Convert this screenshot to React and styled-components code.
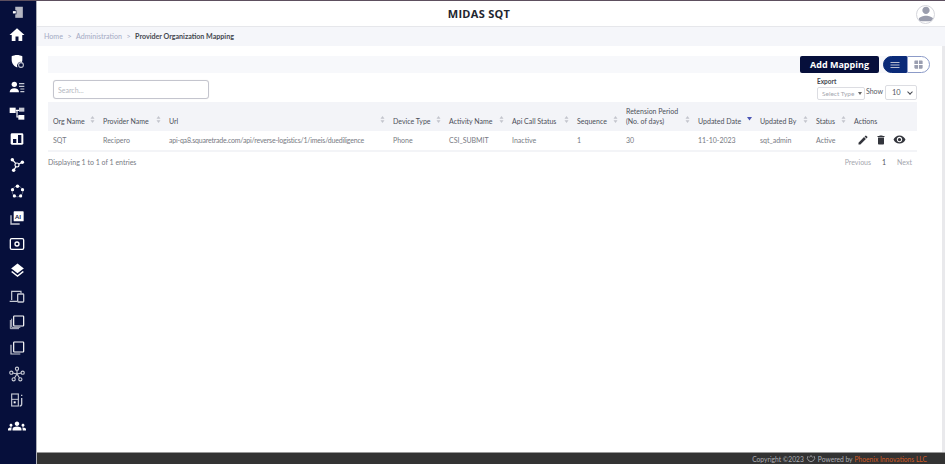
import React from "react";
import styled, { createGlobalStyle } from "styled-components";
import { MdHome, MdEdit, MdDelete, MdVisibility, MdMenu, MdWindow, MdPerson, MdLayers, MdGroups } from "react-icons/md";

const Global = createGlobalStyle`
  html, body { margin: 0; padding: 0; background: #fff; }
  body { font-family: "Lato", "Open Sans", sans-serif; overflow: hidden; }
  * { box-sizing: border-box; }
`;

const Page = styled.div`
  width: 945px; height: 464px; display: flex; flex-direction: column; overflow: hidden;
`;
const TopLine = styled.div`height: 1px; background: #5d4f5f; flex: none;`;
const Body = styled.div`flex: 1; display: flex; min-height: 0;`;
const Sidebar = styled.nav`
  width: 36px; flex: none; background: #060f3b; display: flex; flex-direction: column; align-items: center;
  padding: 2px 2px 0 0;
`;
const NavItem = styled.div`
  width: 18px; height: ${p => p.$h || 26}px; flex: none; display: flex; align-items: center; justify-content: center; color: #fff;
  svg { display: block; }
`;
const Content = styled.div`flex: 1; min-width: 0; display: flex; flex-direction: column; border-left: 1px solid #aeb0b8;`;
const Header = styled.header`
  height: 26px; flex: none; display: flex; align-items: center; justify-content: center; position: relative;
  border-bottom: 1px solid #e6e7eb; background: #fff;
`;
const Title = styled.h1`
  margin: 0 0 0 -24px; font: 700 11px "Open Sans", sans-serif; color: #22252e; letter-spacing: .3px;
`;
const Avatar = styled.div`
  position: absolute; right: 10px; top: 4px; width: 19px; height: 19px; border-radius: 50%;
  border: 1px solid #d5d6dc; display: flex; align-items: flex-end; justify-content: center; color: #9a9dad; overflow: hidden;
  svg { margin-bottom: -2px; flex: none; }
`;
const Crumbs = styled.div`
  height: 19px; flex: none; background: #f5f6fa; padding: 0 0 1px 7px; display: flex; align-items: center; gap: 4.5px;
  font-size: 7.1px; color: #a4aac4;
  b { color: #44474f; font-weight: 700; }
`;
const Workspace = styled.div`flex: 1; min-height: 0; display: flex;`;
const Panel = styled.main`flex: 1; min-width: 0; padding: 10px 25px 0 11px;`;
const Track = styled.div`width: 3px; flex: none; background: #e9e9ec;`;
const ToolBar = styled.div`
  height: 17px; background: #f7f8fb; display: flex; justify-content: flex-end; align-items: stretch; gap: 4px;
`;
const AddButton = styled.button`
  width: 79px; border: 0; border-radius: 2px; padding: 0; background: #060f3b; color: #fff;
  font: 700 9px "Open Sans", sans-serif;
`;
const Toggle = styled.div`display: flex; width: 47px; margin-right: -13px; flex: none;`;
const ToggleBtn = styled.div`
  flex: 1; display: flex; align-items: center; justify-content: center;
  background: ${p => p.$on ? "#0a2a78" : "#fff"}; color: ${p => p.$on ? "#b9bdd0" : "#9a9eb0"};
  border: 1px solid ${p => p.$on ? "#0a2a78" : "#8c9bc8"};
  border-radius: ${p => p.$on ? "9px 0 0 9px" : "0 9px 9px 0"};
`;
const FilterRow = styled.div`
  height: 29px; display: flex; justify-content: space-between; padding: 7px 0 2px 5px;
`;
const Search = styled.input`
  width: 156px; height: 19px; border: 1px solid #c4c5ce; border-radius: 3px; padding: 0 4px;
  font: 7px "Lato", sans-serif; box-shadow: 0 0 1px #ddd; outline: none;
  &::placeholder { color: #b5b7c0; }
`;
const Right = styled.div`display: flex; align-items: flex-end; margin-top: -3px;`;
const ExportGroup = styled.label`
  display: flex; flex-direction: column; gap: 1px; font-size: 6.5px; font-weight: 700; color: #44474f; line-height: 8px;
`;
const SelectWrap = styled.span`
  position: relative; display: block; width: ${p => p.$w}px; height: ${p => p.$h}px;
  &::after {
    content: ""; position: absolute; pointer-events: none;
    ${p => p.$chevron ? `
      right: 5px; top: 5px; width: 3px; height: 3px; border: solid #44474f; border-width: 0 1.2px 1.2px 0; transform: rotate(45deg);
    ` : `
      right: 3px; top: 5px; border: 2px solid transparent; border-top: 3px solid #666;
    `}
  }
`;
const Select = styled.select`
  appearance: none; display: block; width: 100%; height: 100%; font: 400 ${p => p.$fs}px "Lato", sans-serif; padding: 0 0 0 ${p => p.$pad}px; color: ${p => p.$c};
  border: 1px solid #dcdde2; border-radius: 2px; background: #fff;
`;
const ShowLabel = styled.span`font-size: 7px; color: #55585f; margin: 0 2px 5px 1px;`;

const Table = styled.table`
  width: 869px; border-collapse: collapse; table-layout: fixed; font-size: 7px; color: #777a83;
`;
const HeadCell = styled.th`
  height: 29px; background: #f3f4f8; font-weight: 400; color: #4c4f59; text-align: left; vertical-align: bottom;
  padding: 0 3px 5px 5px; line-height: 10px;
`;
const HeadInner = styled.div`display: flex; justify-content: space-between; align-items: flex-end;`;
const Sort = styled.svg`flex: none; margin-bottom: 3px; display: block;`;
const Cell = styled.td`
  height: 20px; padding: 0 0 2px 5px; border-bottom: 2px solid #f3f4f7; white-space: nowrap; overflow: hidden;
  letter-spacing: ${p => p.$tight ? "-.2px" : "normal"};
`;
const Actions = styled.div`display: flex; align-items: center; color: #33353c; margin-left: 3px; height: 12px;
  svg { margin-right: 6px; flex: none; }
`;
const TableFoot = styled.div`
  display: flex; justify-content: space-between; align-items: center; height: 19px; font-size: 7px; color: #777a83; padding-right: 5px;
`;
const Pager = styled.div`display: flex; gap: 11px; color: #a4a6ae; span:nth-child(2){color:#55585f;}`;
const Footer = styled.footer`
  height: 12px; flex: none; background: #333; border-top: 1px solid #999; display: flex; align-items: center; justify-content: flex-end;
  padding-right: 18px; gap: 2px; font-size: 6.7px; color: #aeb0b6;
  em { font-style: normal; color: #cf5a24; }
`;

const W = "#fff", G = "#c6c9d4";
const Ico = ({ children, s = 16 }) => <svg width={s} height={s} viewBox="0 0 24 24" fill="none">{children}</svg>;
const icons = [
  <Ico s={14}><rect x="9" y="3" width="13" height="19" fill="#b4b6c2"/><rect x="3" y="9" width="8" height="7" fill="#060f3b"/><rect x="5" y="10.5" width="5" height="4" fill={W}/></Ico>,
  <MdHome size={18}/>,
  <Ico><path d="M12 3c3 0 6 1 8 2v5a9 9 0 0 1-.6 3.5 6 6 0 0 0-6.9 8.2C8 20 4 16 4 10V5c2-1 5-2 8-2Z" fill={W}/><circle cx="18" cy="18" r="3.6" stroke={G} strokeWidth="1.6"/></Ico>,
  <Ico><circle cx="8" cy="8" r="4" fill={W}/><path d="M1 20c0-4 3-6 7-6s7 2 7 6Z" fill={W}/><path d="M15 7h8M15 11h8M17 15h6M17 19h6" stroke={G} strokeWidth="1.7"/></Ico>,
  <Ico><rect x="1" y="4" width="9" height="8" fill={W}/><rect x="15" y="4" width="8" height="6" fill={G}/><rect x="14" y="15" width="9" height="7" fill={W}/><path d="M10 8h5M12 8v10h3" stroke={W} strokeWidth="1.8"/></Ico>,
  <Ico><rect x="2.5" y="3.5" width="19" height="17" rx="2" fill={W}/><rect x="6" y="12" width="5" height="6" fill="#060f3b"/><rect x="13.5" y="6" width="5" height="12" fill="#060f3b"/></Ico>,
  <Ico><path d="M5 4 12 12 20 8M12 12 7 20" stroke={W} strokeWidth="1.8"/><circle cx="5" cy="4" r="2.6" fill={W}/><circle cx="20" cy="8" r="2.6" fill={W}/><circle cx="7" cy="20" r="2.6" fill={W}/><circle cx="12" cy="12" r="3" fill="#060f3b" stroke={W} strokeWidth="1.6"/></Ico>,
  <Ico s={15}><circle cx="12" cy="12" r="8.5" stroke={G} strokeWidth="1" opacity=".7"/><circle cx="12" cy="3.5" r="2.8" fill={W}/><circle cx="4" cy="9" r="2.6" fill={W}/><circle cx="20" cy="9" r="2.6" fill={W}/><circle cx="7" cy="19" r="2.6" fill={W}/><circle cx="17" cy="19" r="2.6" fill={W}/></Ico>,
  <Ico><path d="M3 8v13h13" stroke={G} strokeWidth="2"/><rect x="7" y="2" width="15" height="15" rx="1" fill={W}/><text x="9" y="13" fontSize="9" fontWeight="700" fill="#060f3b" fontFamily="Lato">AI</text></Ico>,
  <Ico><rect x="2" y="4" width="20" height="16" rx="2" stroke={W} strokeWidth="2"/><circle cx="12" cy="12" r="3" stroke={W} strokeWidth="2"/></Ico>,
  <MdLayers size={17}/>,
  <Ico><path d="M4 18V5h14v3M1 20h11" stroke={G} strokeWidth="1.8"/><rect x="13" y="9" width="9" height="12" rx="1" stroke={G} strokeWidth="2"/></Ico>,
  <Ico><rect x="7" y="3" width="15" height="15" rx="1" stroke={W} strokeWidth="1.8"/><path d="M4 7v13h13M2 9v13h13" stroke={G} strokeWidth="1.4"/></Ico>,
  <Ico><rect x="7" y="3" width="15" height="15" rx="1" stroke={W} strokeWidth="1.8"/><path d="M3 7v14h14" stroke={G} strokeWidth="1.8"/></Ico>,
  <Ico s={16}><path d="M12 12V4M12 12 4 10M12 12l8-2M12 12l-5 8M12 12l5 8" stroke={G} strokeWidth="1.6"/><g fill="#060f3b" stroke={G} strokeWidth="1.7"><circle cx="12" cy="4" r="2.4"/><circle cx="3.5" cy="10" r="2.4"/><circle cx="20.5" cy="10" r="2.4"/><circle cx="7" cy="20" r="2.4"/><circle cx="17" cy="20" r="2.4"/></g></Ico>,
  <Ico><rect x="4" y="3" width="10" height="18" stroke={G} strokeWidth="1.7"/><path d="M4 11h10" stroke={G} strokeWidth="1.5"/><rect x="7" y="14" width="3" height="3" fill={W}/><path d="M19 9v9c0 2-1 3-3 3M19 4v2" stroke={G} strokeWidth="2"/></Ico>,
  <MdGroups size={18}/>,
];
const navHeight = i => (i === 0 ? 18 : i === 1 ? 27 : i === 7 ? 27 : 26);

const columns = [
  ["Org Name", 50], ["Provider Name", 66], ["Url", 224], ["Device Type", 56], ["Activity Name", 63], ["Api Call Status", 65],
  ["Sequence", 49], [<>Retension Period<br/>(No. of days)</>, 72], ["Updated Date", 62, "desc"], ["Updated By", 56], ["Status", 38], ["Actions", 68, "none"],
];
const row = ["SQT", "Recipero", "api-qa8.squaretrade.com/api/reverse-logistics/1/imeis/duediligence", "Phone", "CSI_SUBMIT", "Inactive", "1", "30", "11-10-2023", "sqt_admin", "Active"];

const SortMark = ({ mode }) => mode === "none" ? null : (
  <Sort width="5" height="7" viewBox="0 0 5 7">
    {mode === "desc"
      ? <path d="M0 1h5L2.5 4.5Z" fill="#4a55b5"/>
      : <><path d="M2.5 0 4.5 2.7H.5Z" fill="#c3c5cd"/><path d="M2.5 7 .5 4.3h4Z" fill="#c3c5cd"/></>}
  </Sort>
);

export default function App() {
  return (
    <Page>
      <Global/>
      <TopLine/>
      <Body>
        <Sidebar>
          {icons.map((ic, i) => <NavItem key={i} $h={navHeight(i)}>{ic}</NavItem>)}
        </Sidebar>
        <Content>
          <Header>
            <Title>MIDAS SQT</Title>
            <Avatar><MdPerson size={22}/></Avatar>
          </Header>
          <Crumbs><span>Home</span><span>&gt;</span><span>Administration</span><span>&gt;</span><b>Provider Organization Mapping</b></Crumbs>
          <Workspace>
            <Panel>
              <ToolBar>
                <AddButton>Add Mapping</AddButton>
                <Toggle>
                  <ToggleBtn $on><MdMenu size={12}/></ToggleBtn>
                  <ToggleBtn><MdWindow size={11}/></ToggleBtn>
                </Toggle>
              </ToolBar>
              <FilterRow>
                <Search placeholder="Search..."/>
                <Right>
                  <ExportGroup>Export
                    <SelectWrap $w={48} $h={13}>
                      <Select $fs={6.5} $pad={4} $c="#a5a7b0"><option>Select Type</option></Select>
                    </SelectWrap>
                  </ExportGroup>
                  <ShowLabel>Show</ShowLabel>
                  <SelectWrap $w={32} $h={15} $chevron>
                    <Select $fs={7.5} $pad={6} $c="#55585f"><option>10</option></Select>
                  </SelectWrap>
                </Right>
              </FilterRow>
              <Table>
                <colgroup>{columns.map((c, i) => <col key={i} width={c[1]}/>)}</colgroup>
                <thead>
                  <tr>{columns.map((c, i) => (
                    <HeadCell key={i}><HeadInner><span>{c[0]}</span><SortMark mode={c[2]}/></HeadInner></HeadCell>
                  ))}</tr>
                </thead>
                <tbody>
                  <tr>
                    {row.map((t, i) => <Cell key={i} $tight={i === 2}>{t}</Cell>)}
                    <Cell>
                      <Actions>
                        <MdEdit size={12}/><MdDelete size={12}/><MdVisibility size={13}/>
                      </Actions>
                    </Cell>
                  </tr>
                </tbody>
              </Table>
              <TableFoot>
                <span>Displaying 1 to 1 of 1 entries</span>
                <Pager><span>Previous</span><span>1</span><span>Next</span></Pager>
              </TableFoot>
            </Panel>
            <Track/>
          </Workspace>
          <Footer>
            <span>Copyright ©2023</span>
            <svg width="10" height="9" viewBox="0 0 10 9" fill="none"><path d="M2 2a3.6 3.6 0 1 0 6 0M3.4 3.5 5 1.5l1.6 2" stroke="#aeb0b6" strokeWidth=".8"/></svg>
            <span>Powered by</span> <em>Phoenix Innovations LLC</em>
          </Footer>
        </Content>
      </Body>
    </Page>
  );
}
